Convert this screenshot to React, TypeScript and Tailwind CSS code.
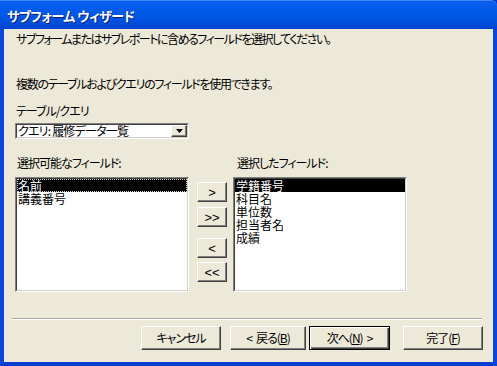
import type { ReactNode } from "react";

const leftFields = ["名前", "講義番号"];
const rightFields = ["学籍番号", "科目名", "単位数", "担当者名", "成績"];

const bevel =
  "border border-t-white border-l-white border-r-[#404040] border-b-[#404040] shadow-[inset_-1px_-1px_#808080]";
const sunken =
  "border border-t-[#808080] border-l-[#808080] border-r-white border-b-white";
const sunkenInner =
  "border border-t-[#404040] border-l-[#404040] border-r-[#d4d0c8] border-b-[#d4d0c8]";

function SmallButton({ label, className }: { label: string; className: string }) {
  return (
    <div
      className={`flex h-[20px] w-[30px] items-center justify-center font-['Liberation_Sans',sans-serif] text-[13px] leading-none ${bevel} ${className}`}
    >
      {label}
    </div>
  );
}

function WizardButton({
  children,
  width,
  isDefault,
}: {
  children: ReactNode;
  width: string;
  isDefault?: boolean;
}) {
  return (
    <div
      className={`flex h-[24px] items-center justify-center text-[12px] leading-none tracking-[-1px] ${width} ${
        isDefault
          ? "border border-black shadow-[inset_1px_1px_#fff,inset_-1px_-1px_#404040,inset_-2px_-2px_#808080]"
          : bevel
      }`}
    >
      {children}
    </div>
  );
}

function ListBox({
  items,
  focused,
}: {
  items: string[];
  focused?: boolean;
}) {
  return (
    <div className={`h-[115px] w-[174px] ${sunken}`}>
      <div className={`h-full w-full bg-white ${sunkenInner}`}>
        {items.map((item, i) => (
          <div
            key={item}
            className={`h-[13px] pl-[1px] text-[12px] leading-[13px] ${
              i === 0 ? "bg-black text-white" : "text-black"
            } ${
              i === 0 && focused
                ? "outline-1 -outline-offset-1 outline-dotted outline-[#d0d0d0]"
                : ""
            }`}
          >
            {item}
          </div>
        ))}
      </div>
    </div>
  );
}

export default function App() {
  return (
    <div className="flex h-[366px] w-[497px] flex-col overflow-hidden bg-[#0831d9] font-['Noto_Sans_CJK_JP','Noto_Sans',sans-serif] text-black [font-feature-settings:'palt']">
      <div className="flex h-[29px] shrink-0 items-center rounded-tr-[6px] border-t border-[#3d8cf7] bg-gradient-to-b from-[#0a5ff0] via-[#0058e6] to-[#0045d2] pl-[7px]">
        <span className="text-[13px] font-bold leading-none tracking-[-0.5px] text-white [text-shadow:1px_1px_#0a1e80]">
          サブフォーム ウィザード
        </span>
      </div>

      <div className="flex flex-1 border-x-4 border-b-4 border-x-[#0b46dc] border-b-[#0a3cd0]">
        <div className="flex flex-1 flex-col bg-[#ece9d8]">
          <div className="flex flex-col px-[11px]">
            <p className="mt-[3px] h-[14px] pl-[1px] text-[12px] leading-[14px] tracking-[-1.5px]">
              サブフォームまたはサブレポートに含めるフィールドを選択してください。
            </p>
            <p className="mt-[31px] h-[14px] pl-[1px] text-[12px] leading-[14px] tracking-[-1.3px]">
              複数のテーブルおよびクエリのフィールドを使用できます。
            </p>
            <p className="mt-[13px] h-[14px] pl-[1px] text-[12px] leading-[14px] tracking-[-1px]">
              テーブル/クエリ
            </p>

            <div className={`mt-[5px] h-[16px] w-[174px] ${sunken}`}>
              <div className={`flex h-full w-full items-center bg-white ${sunkenInner}`}>
                <span className="flex-1 pl-[1px] text-[12px] leading-none tracking-[-0.8px]">
                  クエリ: 履修データ一覧
                </span>
                <div className={`flex h-full w-[16px] items-center justify-center ${bevel} bg-[#ece9d8]`}>
                  <svg width="7" height="4" viewBox="0 0 7 4">
                    <path d="M0 0h7L3.5 4z" fill="#000" />
                  </svg>
                </div>
              </div>
            </div>

            <div className="mt-[17px] flex h-[14px] text-[12px] leading-[14px] tracking-[-1px]">
              <span className="w-[218px] pl-[2px]">選択可能なフィールド:</span>
              <span className="pl-[4px]">選択したフィールド:</span>
            </div>

            <div className="mt-[7px] flex">
              <ListBox items={leftFields} focused />
              <div className="ml-[8px] mr-[6px] flex flex-col pt-[5px]">
                <SmallButton label=">" className="" />
                <SmallButton label=">>" className="mt-[5px]" />
                <SmallButton label="<" className="mt-[11px]" />
                <SmallButton label="<<" className="mt-[4px]" />
              </div>
              <ListBox items={rightFields} />
            </div>
          </div>

          <div className="ml-[8px] mr-[11px] mt-[26px] h-[2px] border-t border-b border-t-[#aca899] border-b-white" />

          <div className="mt-[6px] flex pl-[137px]">
            <WizardButton width="w-[80px]">キャンセル</WizardButton>
            <div className="ml-[9px]">
              <WizardButton width="w-[76px]">
                <span className="mr-[4px]">&lt;</span>戻る(<span className="underline">B</span>)
              </WizardButton>
            </div>
            <div className="ml-[3px]">
              <WizardButton width="w-[81px]" isDefault>
                次へ(<span className="underline">N</span>)<span className="ml-[4px]">&gt;</span>
              </WizardButton>
            </div>
            <div className="ml-[13px]">
              <WizardButton width="w-[80px]">
                完了(<span className="underline">F</span>)
              </WizardButton>
            </div>
          </div>
        </div>
      </div>
    </div>
  );
}
